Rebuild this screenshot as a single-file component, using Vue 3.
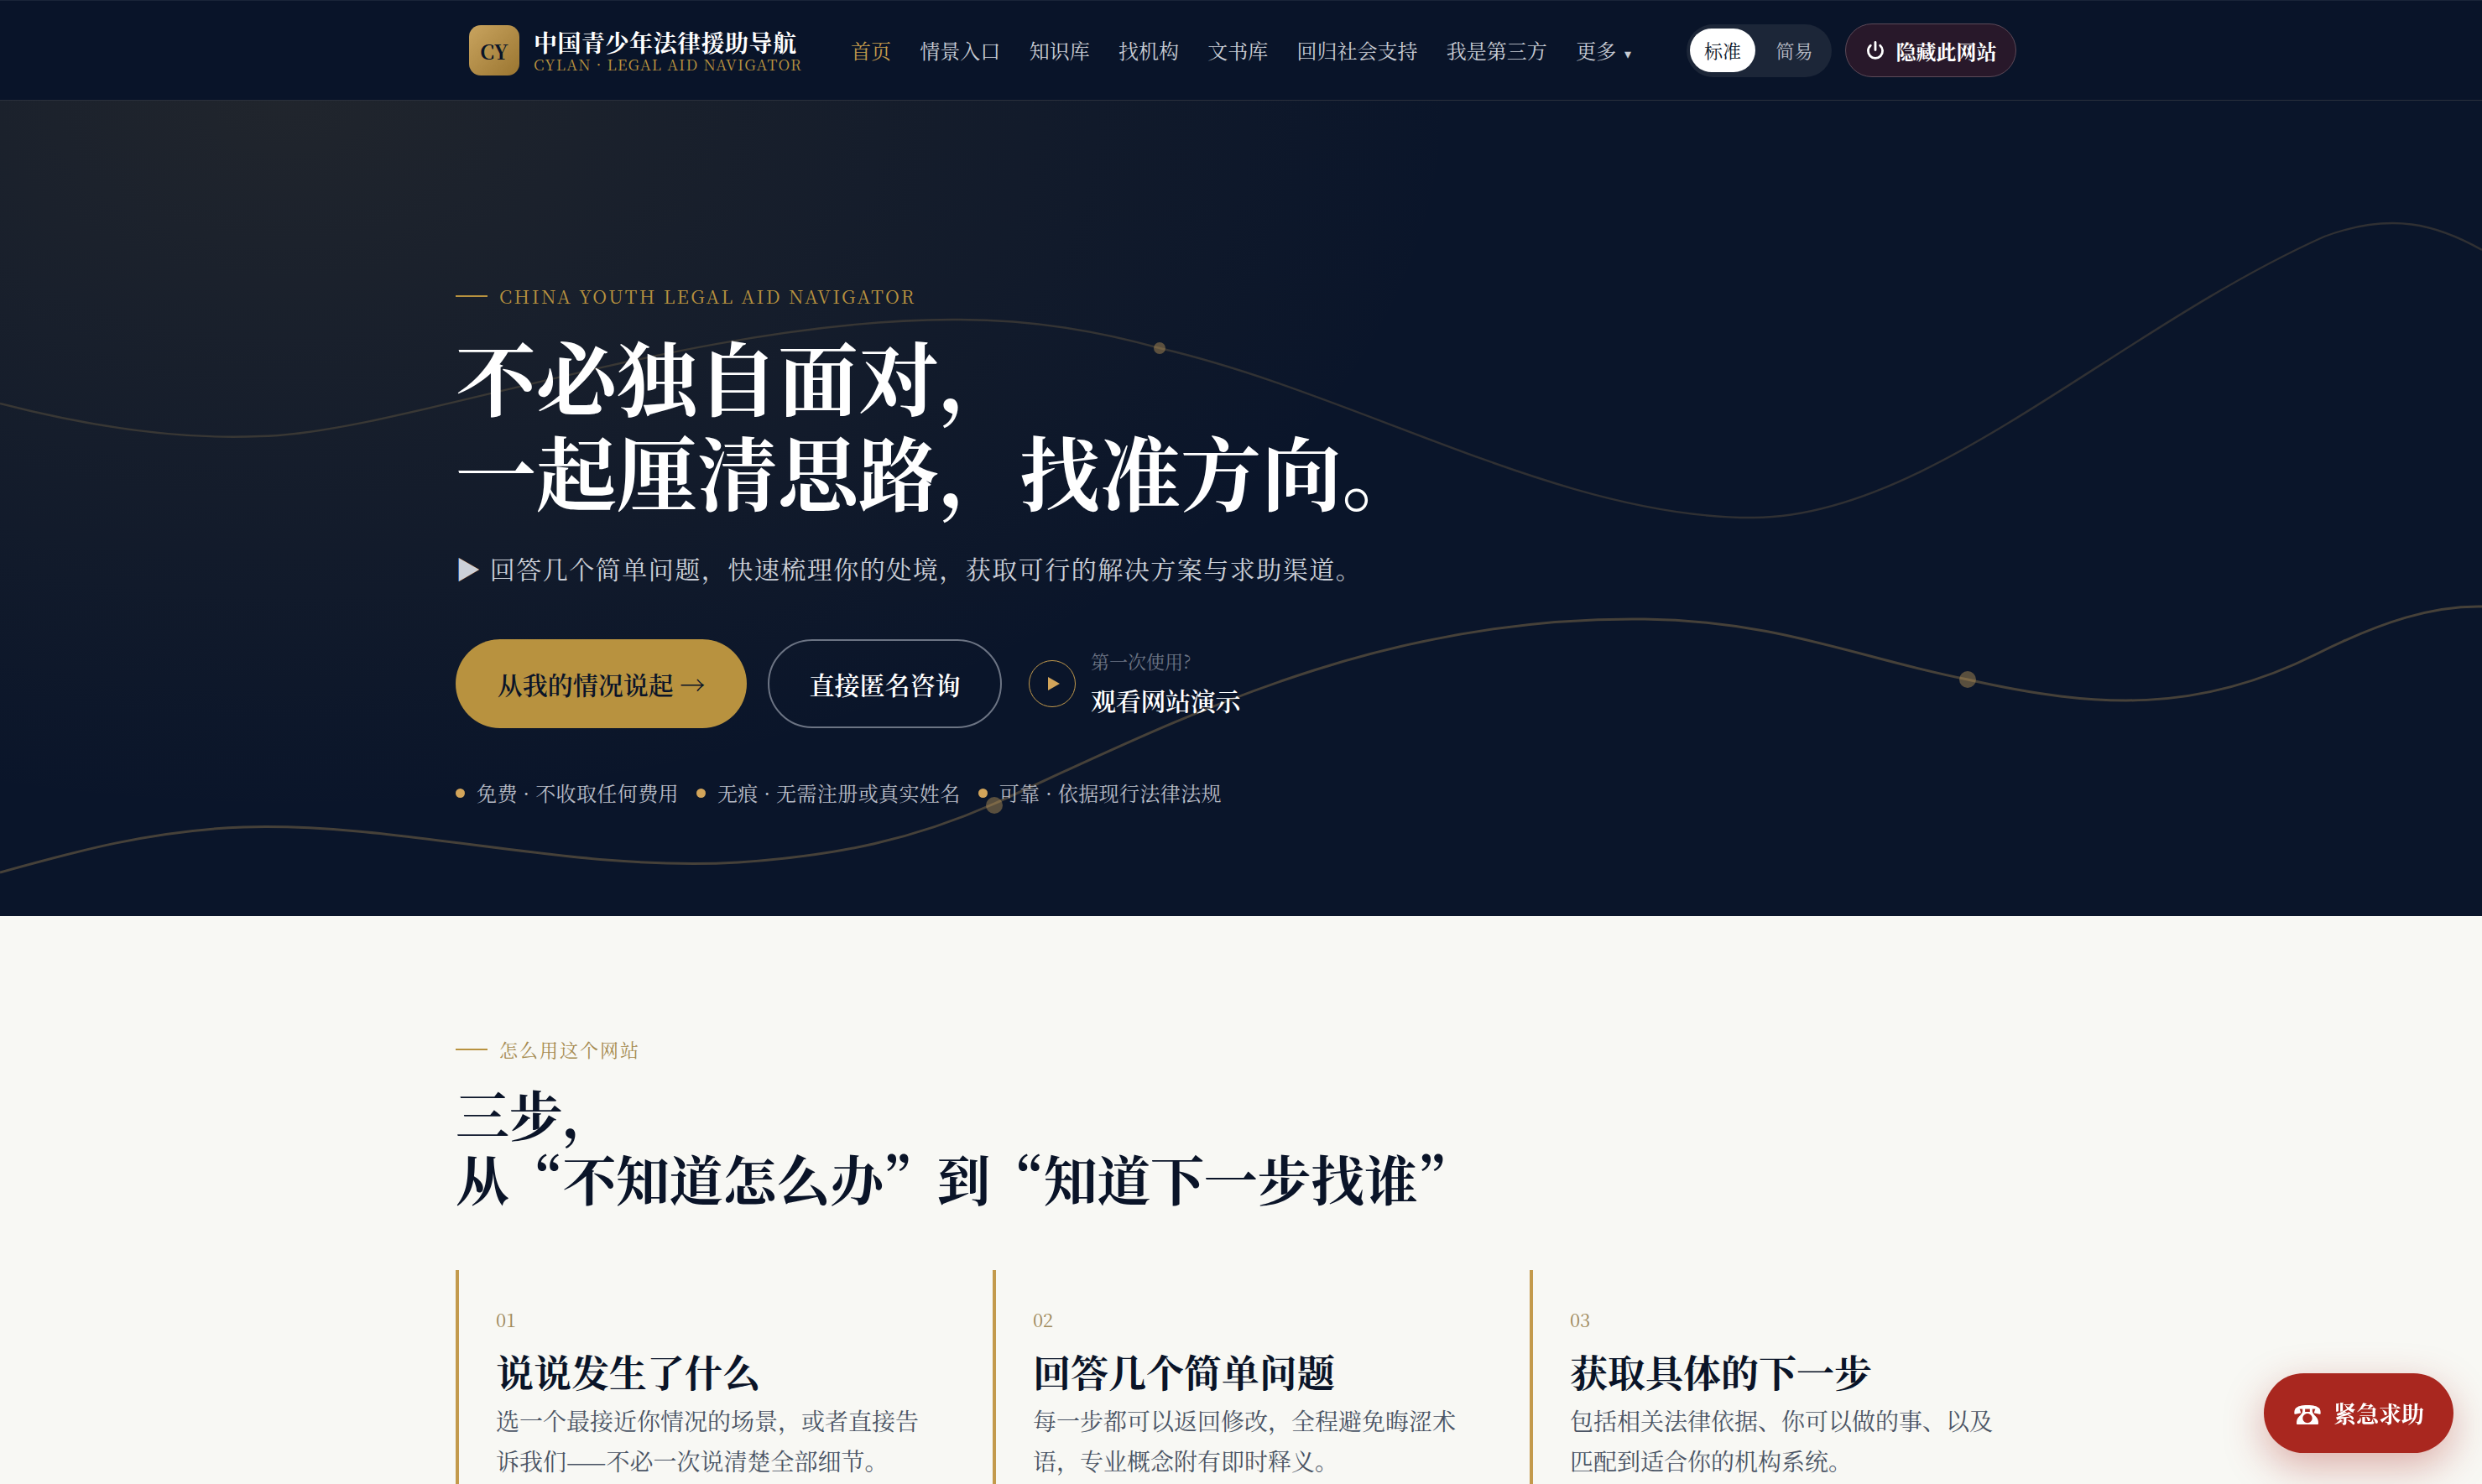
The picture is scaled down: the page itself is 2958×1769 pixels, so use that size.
<template>
  <div class="page">
    <header class="nav">
      <div class="nav-inner">
        <div class="brand">
          <div class="logo">CY</div>
          <div class="brand-text">
            <div class="brand-title">中国青少年法律援助导航</div>
            <div class="brand-sub">CYLAN · LEGAL AID NAVIGATOR</div>
          </div>
        </div>
        <nav class="links">
          <a v-for="item in navItems" :key="item" class="link" :class="{ active: item === '首页' }">{{ item }}</a>
          <a class="link">更多<span class="caret">▾</span></a>
        </nav>
        <div class="mode">
          <span class="mode-btn on">标准</span>
          <span class="mode-btn">简易</span>
        </div>
        <button class="hide-btn">
          <svg class="power" viewBox="0 0 24 24" fill="none" stroke="#fff" stroke-width="2.8" stroke-linecap="round">
            <path d="M12 2.5v9" />
            <path d="M6.3 6.3a8.6 8.6 0 1 0 11.4 0" />
          </svg>
          隐藏此网站
        </button>
      </div>
    </header>

    <section class="hero">
      <svg class="waves" viewBox="0 0 2958 972" fill="none">
        <path d="M0 361C120 392 220 404 310 400C470 398 820 262 1134 261C1215 260 1300 272 1382 295C1620 350 1860 498 2090 497C2300 496 2520 274 2770 162C2850 132 2905 148 2958 178" stroke="rgba(199,160,90,0.2)" stroke-width="2.4" />
        <circle cx="1382" cy="295" r="7" fill="rgba(199,160,90,0.42)" />
        <path d="M0 920C90 895 180 870 290 866C480 860 680 920 880 908C1000 900 1090 880 1185 838C1400 740 1640 614 1960 618C2120 620 2220 666 2345 690C2500 725 2620 730 2760 660C2840 620 2900 602 2958 603" stroke="rgba(199,160,90,0.32)" stroke-width="3" />
        <circle cx="1185" cy="840" r="10" fill="rgba(199,160,90,0.42)" />
        <circle cx="2345" cy="690" r="10" fill="rgba(199,160,90,0.42)" />
      </svg>
      <div class="wrap hero-body">
        <div class="eyebrow"><i class="dash"></i>CHINA YOUTH LEGAL AID NAVIGATOR</div>
        <h1>不必独自面对，<br />一起厘清思路，找准方向。</h1>
        <p class="lead">▶ 回答几个简单问题，快速梳理你的处境，获取可行的解决方案与求助渠道。</p>
        <div class="actions">
          <button class="btn btn-gold">从我的情况说起 →</button>
          <button class="btn btn-line">直接匿名咨询</button>
          <div class="demo">
            <span class="play"><i class="tri"></i></span>
            <div class="demo-copy">
              <div class="demo-hint">第一次使用?</div>
              <div class="demo-text">观看网站演示</div>
            </div>
          </div>
        </div>
        <ul class="trust">
          <li v-for="t in trustItems" :key="t">{{ t }}</li>
        </ul>
      </div>
    </section>

    <section class="steps">
      <div class="wrap">
        <div class="label"><i class="dash"></i>怎么用这个网站</div>
        <h2>三步，<br />从“不知道怎么办”到“知道下一步找谁”</h2>
        <div class="cards">
          <article v-for="s in steps" :key="s.no" class="card">
            <div class="no">{{ s.no }}</div>
            <h3>{{ s.title }}</h3>
            <p>{{ s.desc }}</p>
          </article>
        </div>
      </div>
    </section>

    <button class="sos"><span class="sos-icon">☎</span>紧急求助</button>
  </div>
</template>

<script setup>
const navItems = ['首页', '情景入口', '知识库', '找机构', '文书库', '回归社会支持', '我是第三方']

const trustItems = ['免费 · 不收取任何费用', '无痕 · 无需注册或真实姓名', '可靠 · 依据现行法律法规']

const steps = [
  { no: '01', title: '说说发生了什么', desc: '选一个最接近你情况的场景，或者直接告诉我们——不必一次说清楚全部细节。' },
  { no: '02', title: '回答几个简单问题', desc: '每一步都可以返回修改，全程避免晦涩术语，专业概念附有即时释义。' },
  { no: '03', title: '获取具体的下一步', desc: '包括相关法律依据、你可以做的事、以及匹配到适合你的机构系统。' }
]
</script>

<style>
html, body {
  margin: 0;
  background: #f8f8f4;
}
</style>

<style scoped>
.page {
  font-family: "Noto Serif CJK SC", "Liberation Serif", "Noto Sans CJK SC", serif;
  color: #0a1428;
}

.nav {
  height: 120px;
  background: #091429;
  border-top: 1px solid #1a2538;
  border-bottom: 1px solid #2a303c;
  box-sizing: border-box;
}

.nav-inner {
  width: 1872px;
  margin: 0 auto;
  height: 100%;
  display: flex;
  align-items: center;
  padding: 0 12px 0 16px;
  box-sizing: border-box;
}

.brand {
  display: flex;
  align-items: center;
  gap: 17px;
  flex-shrink: 0;
}

.logo {
  width: 60px;
  height: 60px;
  border-radius: 14px;
  background: linear-gradient(135deg, #c9a45f, #9a7530);
  color: #0a1428;
  font-size: 24px;
  font-weight: 700;
  display: flex;
  align-items: center;
  justify-content: center;
}

.brand-title {
  color: #fff;
  font-size: 28px;
  font-weight: 700;
  line-height: 32px;
  letter-spacing: 0.5px;
  white-space: nowrap;
}

.brand-sub {
  color: #b8923f;
  font-size: 18px;
  line-height: 20px;
  letter-spacing: 1.2px;
  white-space: nowrap;
}

.links {
  display: flex;
  align-items: center;
  gap: 34.3px;
  margin-left: 58px;
  padding-bottom: 2px;
  font-size: 24px;
  color: #c8ccd4;
}

.link {
  white-space: nowrap;
}

.link.active {
  color: #c39a4c;
}

.caret {
  font-size: 16px;
  margin-left: 10px;
}

.mode {
  display: flex;
  align-items: center;
  margin-left: auto;
  height: 63px;
  padding: 0 4px;
  border-radius: 32px;
  background: #1c2638;
  box-sizing: border-box;
}

.mode-btn {
  width: 78px;
  height: 52px;
  line-height: 52px;
  text-align: center;
  border-radius: 26px;
  font-size: 22px;
  color: #b8bcc6;
}

.mode-btn:last-child {
  width: 87px;
  padding-left: 6px;
  box-sizing: border-box;
}

.mode-btn.on {
  background: #fff;
  color: #0a1428;
}

.hide-btn {
  display: flex;
  align-items: center;
  justify-content: center;
  gap: 13px;
  margin-left: 16px;
  width: 204px;
  height: 64px;
  padding: 0;
  border-radius: 32px;
  border: 1px solid #5c4a58;
  background: #28182a;
  color: #fff;
  font: 700 24px "Noto Serif CJK SC", "Liberation Serif", serif;
  white-space: nowrap;
}

.power {
  width: 24px;
  height: 24px;
  flex-shrink: 0;
}

.hero {
  position: relative;
  height: 972px;
  overflow: hidden;
  background:
    radial-gradient(ellipse 1400px 850px at 340px 0, rgba(184, 146, 63, 0.13), transparent 100%),
    #0a152a;
}

.waves {
  position: absolute;
  inset: 0;
  width: 100%;
  height: 100%;
}

.wrap {
  width: 1872px;
  margin: 0 auto;
}

.hero-body {
  position: relative;
  padding-top: 216px;
}

.eyebrow {
  display: flex;
  align-items: center;
  gap: 14px;
  font-size: 22px;
  line-height: 34px;
  letter-spacing: 2.35px;
  color: #b8923f;
}

.dash {
  display: block;
  width: 38px;
  height: 2px;
  background: #b8923f;
}

h1 {
  margin: 20px 0 0;
  font-size: 96px;
  line-height: 113px;
  font-weight: 700;
  color: #fff;
  white-space: nowrap;
}

.lead {
  margin: 37px 0 0;
  font-size: 30px;
  line-height: 48px;
  letter-spacing: 1.5px;
  color: #ccd0d8;
}

.actions {
  display: flex;
  align-items: center;
  margin-top: 61px;
}

.btn {
  height: 106px;
  border-radius: 53px;
  font: 600 30px "Noto Serif CJK SC", "Liberation Serif", serif;
  box-sizing: border-box;
}

.btn-gold {
  width: 347px;
  border: 0;
  background: #b8923f;
  color: #0a1428;
}

.btn-line {
  width: 279px;
  margin-left: 25px;
  background: transparent;
  border: 2px solid #6c7484;
  color: #fff;
}

.demo {
  display: flex;
  align-items: center;
  gap: 18px;
  margin-left: 32px;
}

.demo-copy {
  padding-bottom: 3px;
}

.play {
  width: 56px;
  height: 56px;
  border: 1.5px solid #c39a4c;
  border-radius: 50%;
  display: flex;
  align-items: center;
  justify-content: center;
  box-sizing: border-box;
}

.tri {
  display: block;
  margin-left: 3px;
  border-left: 14px solid #d3a55a;
  border-top: 8.5px solid transparent;
  border-bottom: 8.5px solid transparent;
}

.demo-hint {
  font-size: 22px;
  line-height: 34px;
  color: #6c7484;
}

.demo-text {
  margin-top: 6px;
  font-size: 30px;
  line-height: 46px;
  letter-spacing: -0.3px;
  font-weight: 600;
  color: #fff;
}

.trust {
  list-style: none;
  display: flex;
  gap: 21px;
  margin: 58px 0 0;
  padding: 0;
  font-size: 24px;
  line-height: 38px;
  letter-spacing: 0.4px;
  color: #b8bcc6;
}

.trust li {
  display: flex;
  align-items: center;
  gap: 14px;
}

.trust li::before {
  content: "";
  width: 11px;
  height: 11px;
  border-radius: 50%;
  background: #d3a55a;
}

.steps {
  background: #f8f8f4;
  padding: 142px 0 60px;
}

.label {
  display: flex;
  align-items: center;
  gap: 14px;
  font-size: 22px;
  line-height: 34px;
  letter-spacing: 2px;
  color: #a58a4f;
}

h2 {
  margin: 20px 0 0;
  font-size: 64px;
  line-height: 77px;
  letter-spacing: -0.3px;
  font-weight: 700;
  color: #0a1428;
}

.cards {
  display: grid;
  grid-template-columns: repeat(3, 1fr);
  gap: 48px;
  margin-top: 72px;
}

.card {
  border-left: 4px solid #c39a4c;
  padding: 42px 24px 40px 44px;
}

.no {
  font-size: 22px;
  line-height: 34px;
  color: #a08a5c;
}

h3 {
  margin: 18px 0 0;
  font-size: 45px;
  line-height: 54px;
  font-weight: 700;
  color: #0a1428;
}

.card p {
  margin: 8px 0 0;
  font-size: 28px;
  line-height: 47.6px;
  color: #4a5464;
}

.sos {
  position: fixed;
  right: 34px;
  bottom: 37px;
  width: 226px;
  height: 95px;
  padding: 0;
  border: 0;
  border-radius: 48px;
  background: #a9271f;
  color: #fff;
  font: 700 27px "Noto Serif CJK SC", "Liberation Serif", serif;
  box-shadow: 0 16px 48px rgba(169, 39, 31, 0.35);
  display: flex;
  align-items: center;
  justify-content: center;
}

.sos-icon {
  font-size: 34px;
  line-height: 1;
  margin-right: 14px;
}
</style>
